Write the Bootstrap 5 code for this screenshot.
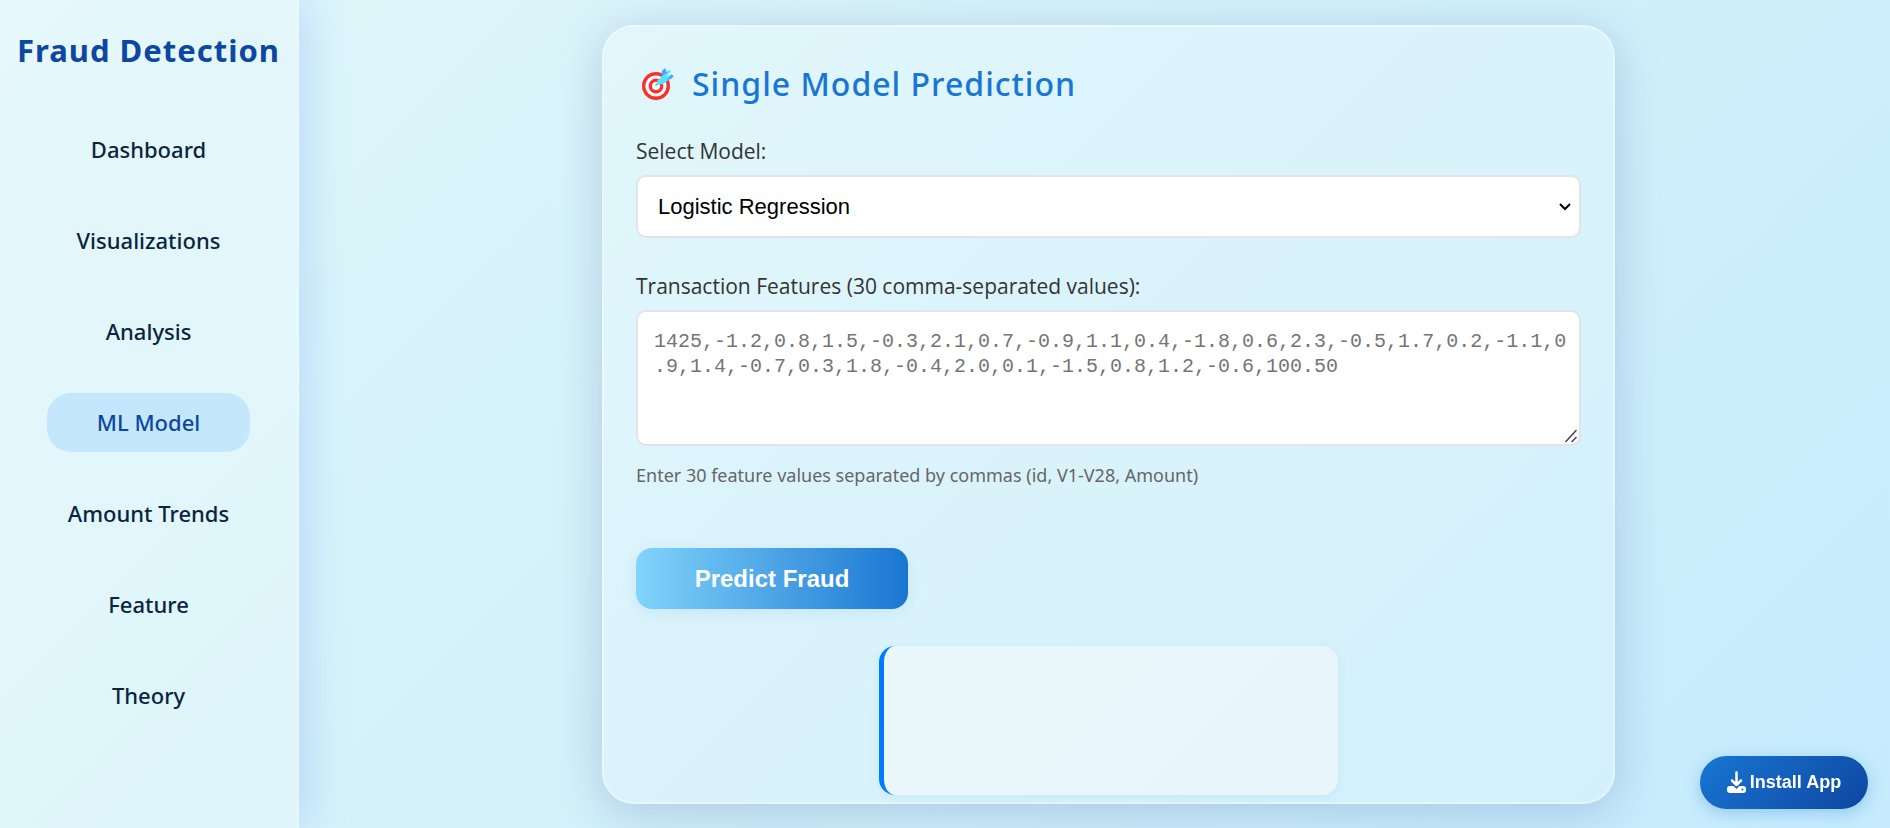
<!DOCTYPE html>
<html lang="en">
<head>
<meta charset="utf-8">
<meta name="viewport" content="width=device-width, initial-scale=1">
<title>Fraud Detection</title>
<link href="https://cdn.jsdelivr.net/npm/bootstrap@5.3.0/dist/css/bootstrap.min.css" rel="stylesheet">
<style>
  body {
    font-family: "Noto Sans", "Open Sans", sans-serif;
    background: linear-gradient(135deg, #e0f7fa, #d1f1fa 55%, #c5ebfd) fixed;
  }
  .sidebar {
    width: 299px;
    padding: 23px 0 24px;
    background: rgba(255, 255, 255, .2);
    border-right: 2px solid rgba(255, 255, 255, .3);
    box-shadow: 8px 0 40px rgba(64, 112, 244, .2);
  }
  .brand {
    font-size: 31px;
    line-height: 54px;
    letter-spacing: 1px;
    color: #0d47a1;
    margin-bottom: 43px;
  }
  .side-nav { gap: 32px; padding: 0 47px; }
  .side-nav .nav-link {
    font-size: 22px;
    line-height: 35px;
    padding: 12px 0;
    border-radius: 24px;
    color: #0a2540;
    text-align: center;
    white-space: nowrap;
  }
  .side-nav .nav-link.active { background: #c4e7fc; color: #0d47a1; }
  .content { padding: 25px 0 24px 28px; min-width: 0; }
  .panel {
    width: 100%;
    max-width: 1013px;
    padding: 30px 32px 7px;
    background: rgba(255, 255, 255, .2);
    border: 2px solid rgba(255, 255, 255, .35);
    border-radius: 32px;
    box-shadow: 0 8px 48px rgba(31, 38, 135, .2);
  }
  .panel-title {
    font-size: 32px;
    line-height: 54px;
    letter-spacing: 1px;
    color: #1976d2;
    gap: 15px;
    margin-bottom: 24px;
  }
  .panel-title svg { margin-left: 5px; }
  .field-label {
    font-family: "Open Sans", "Noto Sans", sans-serif;
    font-size: 21px;
    line-height: 32px;
    color: #333;
    margin-bottom: 8px;
  }
  .field {
    width: 100%;
    background-color: #fff;
    border: 2px solid #e1e5e9;
    border-radius: 10px;
  }
  .model-select {
    height: 63px;
    padding: 0 32px 0 20px;
    font: 22px "Liberation Sans", sans-serif;
    color: #000;
    margin-bottom: 32px;
    appearance: none;
    background-image: url("data:image/svg+xml,%3Csvg xmlns='http://www.w3.org/2000/svg' width='14' height='10' viewBox='0 0 14 10'%3E%3Cpath d='M2 2l5 5 5-5' fill='none' stroke='%23000' stroke-width='2'/%3E%3C/svg%3E");
    background-repeat: no-repeat;
    background-position: right 7px center;
  }
  .features {
    height: 136px;
    padding: 17px 12px 16px 16px;
    font: 20px/25px "Liberation Mono", monospace;
    overflow: hidden;
    line-break: anywhere;
  }
  .features::placeholder { color: #757575; }
  .features::-webkit-resizer {
    background: url("data:image/svg+xml,%3Csvg xmlns='http://www.w3.org/2000/svg' width='15' height='15'%3E%3Cpath d='M1.500 13L12.500 1M7.500 13l5-5' stroke='%23444' stroke-width='1.500'/%3E%3C/svg%3E") no-repeat;
  }
  .hint { font-size: 18px; line-height: 28px; color: #666; margin: 15px 0 59px; }
  .predict {
    width: 272px;
    height: 61px;
    border: 0;
    border-radius: 16px;
    background: linear-gradient(90deg, #81d4fa, #1976d2);
    box-shadow: 0 4px 16px rgba(25, 118, 210, .1);
    color: #fff;
    font: bold 24px "Liberation Sans", sans-serif;
  }
  .result {
    width: 459px;
    max-width: 100%;
    height: 149px;
    margin: 37px auto 0;
    background: rgba(248, 249, 252, .54);
    border-left: 5px solid #007bff;
    border-radius: 16px;
    box-shadow: 0 2px 12px rgba(25, 118, 210, .08);
  }
  .install {
    right: 22px;
    bottom: 19px;
    width: 168px;
    height: 53px;
    gap: 4px;
    border: 0;
    border-radius: 27px;
    background: linear-gradient(135deg, #1976d2, #0d47a1);
    box-shadow: 0 4px 16px rgba(25, 118, 210, .3);
    color: #fff;
    font: bold 18px "Liberation Sans", sans-serif;
  }
</style>
</head>
<body>
<div class="d-flex min-vh-100">
  <aside class="sidebar flex-shrink-0">
    <h1 class="brand fw-bold text-center text-nowrap">Fraud Detection</h1>
    <nav class="side-nav nav flex-column fw-medium">
      <a class="nav-link" href="#">Dashboard</a>
      <a class="nav-link" href="#">Visualizations</a>
      <a class="nav-link" href="#">Analysis</a>
      <a class="nav-link active" aria-current="page" href="#">ML Model</a>
      <a class="nav-link" href="#">Amount Trends</a>
      <a class="nav-link" href="#">Feature</a>
      <a class="nav-link" href="#">Theory</a>
    </nav>
  </aside>

  <main class="content flex-grow-1 d-flex justify-content-center align-items-start">
    <section class="panel">
      <h2 class="panel-title d-flex align-items-center fw-medium">
        <svg width="36" height="34" viewBox="0 0 36 34" aria-hidden="true">
          <circle cx="15" cy="19" r="14" fill="#f8312f"/>
          <circle cx="15" cy="19" r="10.6" fill="#fff"/>
          <circle cx="15" cy="19" r="7.4" fill="#f8312f"/>
          <circle cx="15" cy="19" r="4" fill="#fff"/>
          <path d="M15 18l3-3" stroke="#9b9b9b" stroke-width="1.6" stroke-linecap="round"/>
          <path d="M16 18v-4l5-5 7-6 2 1-5 6 6-3 1 2-7 6-3 2z" fill="#50e2ff"/>
          <path d="M20 9l1-5 3-3 2 5zM26 13l4-5 3 1-3 3z" fill="#46a4fb"/>
        </svg>
        <span>Single Model Prediction</span>
      </h2>
      <form>
        <label class="field-label d-block fw-medium" for="model">Select Model:</label>
        <select class="field model-select d-block" id="model">
          <option>Logistic Regression</option>
        </select>
        <label class="field-label d-block fw-medium" for="features">Transaction Features (30 comma-separated values):</label>
        <textarea class="field features d-block" id="features" aria-describedby="hint" placeholder="1425,-1.2,0.8,1.5,-0.3,2.1,0.7,-0.9,1.1,0.4,-1.8,0.6,2.3,-0.5,1.7,0.2,-1.1,0.9,1.4,-0.7,0.3,1.8,-0.4,2.0,0.1,-1.5,0.8,1.2,-0.6,100.50"></textarea>
        <p class="hint" id="hint">Enter 30 feature values separated by commas (id, V1-V28, Amount)</p>
        <button class="predict d-block" type="button">Predict Fraud</button>
      </form>
      <div class="result"></div>
    </section>
  </main>
</div>

<button class="install position-fixed d-flex align-items-center justify-content-center" type="button">
  <svg width="19" height="24" viewBox="0 0 19 24" aria-hidden="true">
    <rect x="0" y="15" width="19" height="7" rx="3" fill="#fff"/>
    <path d="M5 12l4.500 4.500L14 12" fill="none" stroke="#1760bd" stroke-width="2"/>
    <path d="M9.500 1.500v12M5 9.500l4.500 4.500L14 9.500" fill="none" stroke="#fff" stroke-width="2.500" stroke-linecap="round" stroke-linejoin="round"/>
    <circle cx="15.500" cy="18.500" r="1" fill="#1760bd"/>
  </svg>
  <span>Install App</span>
</button>
<script src="https://cdn.jsdelivr.net/npm/bootstrap@5.3.0/dist/js/bootstrap.bundle.min.js"></script>
</body>
</html>
